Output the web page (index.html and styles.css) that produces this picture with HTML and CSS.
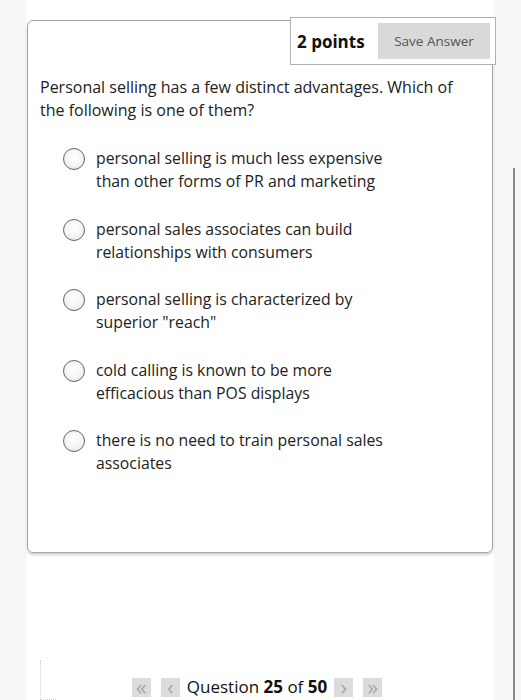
FILE: index.html
```html
<!DOCTYPE html>
<html>
<head>
<meta charset="utf-8">
<link rel="stylesheet" href="styles.css">
</head>
<body>
<div class="page">
  <div class="card">
    <div class="points-box">
      <span class="points">2 points</span>
      <span class="save">Save Answer</span>
    </div>
    <p class="question">Personal selling has a few distinct advantages. Which of the following is one of them?</p>
    <ul class="options">
      <li class="option"><span class="radio"></span><span class="label">personal selling is much less expensive<br>than other forms of PR and marketing</span></li>
      <li class="option"><span class="radio"></span><span class="label">personal sales associates can build<br>relationships with consumers</span></li>
      <li class="option"><span class="radio"></span><span class="label">personal selling is characterized by<br>superior "reach"</span></li>
      <li class="option"><span class="radio"></span><span class="label">cold calling is known to be more<br>efficacious than POS displays</span></li>
      <li class="option"><span class="radio"></span><span class="label">there is no need to train personal sales<br>associates</span></li>
    </ul>
  </div>
  <div class="nav">
    <span class="navbtn">&laquo;</span>
    <span class="navbtn">&lsaquo;</span>
    <span class="navtext">Question <b>25</b> of <b>50</b></span>
    <span class="navbtn">&rsaquo;</span>
    <span class="navbtn">&raquo;</span>
  </div>
  <div class="corner"></div>
</div>
<div class="scrollbar"></div>
</body>
</html>
```
FILE: styles.css
```css
html, body {
  margin: 0;
  padding: 0;
  height: 700px;
  overflow: hidden;
}
body {
  background: #f6f6f6;
  font-family: "Open Sans", "Noto Sans", sans-serif;
  color: #222;
  position: relative;
}
.page {
  position: relative;
  margin-left: 26px;
  width: 468px;
  height: 700px;
  background: #fff;
  padding-top: 20px;
  box-sizing: border-box;
}
.card {
  position: relative;
  margin-left: 1px;
  width: 466px;
  height: 533px;
  box-sizing: border-box;
  border: 1px solid #a4a4a4;
  border-radius: 6px;
  box-shadow: 0 2px 3px rgba(0,0,0,0.18);
  padding: 55px 0 0 12px;
}
.points-box {
  position: absolute;
  left: 262px;
  top: -4px;
  width: 206px;
  height: 48px;
  box-sizing: border-box;
  background: #fff;
  border: 1px solid #b0b0b0;
  display: flex;
  align-items: center;
  padding: 0 5px 0 6px;
}
.points {
  font-weight: 700;
  font-size: 17px;
  color: #111;
  width: 81px;
}
.save {
  flex: 1;
  height: 36px;
  background: #d9d9d9;
  color: #555;
  font-size: 13.5px;
  display: flex;
  align-items: center;
  justify-content: center;
}
.question {
  margin: 0;
  font-size: 16px;
  line-height: 23px;
  width: 430px;
  color: #222;
}
.options {
  list-style: none;
  margin: 25px 0 0 0;
  padding: 0 0 0 23px;
}
.option {
  display: flex;
  align-items: flex-start;
  height: 70.5px;
}
.radio {
  width: 20px;
  height: 20px;
  border: 1px solid #666;
  border-radius: 50%;
  background: radial-gradient(circle at 50% 40%, #fff 0%, #f4f4f4 55%, #dcdcdc 100%);
  margin-top: 1px;
  flex: none;
}
.label {
  margin-left: 11px;
  font-size: 15.8px;
  line-height: 23px;
  margin-top: 0;
  color: #222;
}
.nav {
  position: absolute;
  left: 0;
  right: 0;
  top: 676px;
  display: flex;
  justify-content: center;
  align-items: center;
  padding-right: 6px;
  box-sizing: border-box;
}
.navbtn {
  width: 19px;
  height: 19px;
  background: #dcdcdc;
  color: #a6a6a6;
  font-size: 22px;
  line-height: 17px;
  text-align: center;
  margin: 0 5px;
}
.navtext {
  font-size: 17px;
  color: #111;
  margin: 0 2px;
  line-height: 22px;
}
.navtext b {
  font-weight: 700;
}
.corner {
  position: absolute;
  left: 14px;
  top: 660px;
  width: 16px;
  height: 40px;
  border-left: 1px dotted #ccc;
  border-bottom: 1px dotted #ccc;
  box-sizing: border-box;
}
.scrollbar {
  position: absolute;
  left: 513px;
  top: 168px;
  width: 2px;
  height: 532px;
  background: #888;
}
```
